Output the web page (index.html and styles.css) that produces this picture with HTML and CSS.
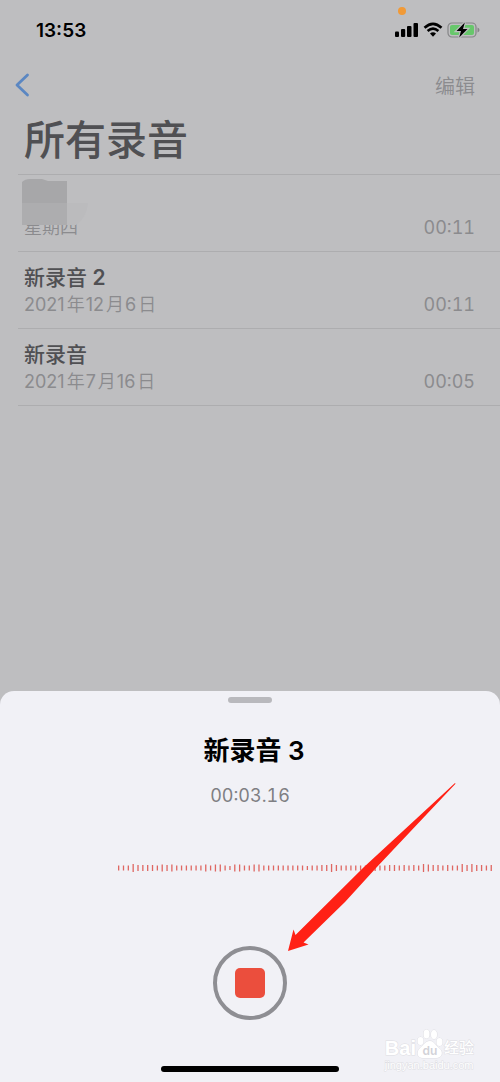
FILE: index.html
```html
<!DOCTYPE html>
<html lang="zh-CN">
<head>
<meta charset="utf-8">
<meta name="viewport" content="width=device-width, initial-scale=1">
<title>所有录音</title>
<link rel="stylesheet" href="styles.css">
</head>
<body>
<div class="screen">
  <header class="status">
    <time class="clock">13:53</time>
    <div class="indicators">
      <span class="mic-dot"></span>
      <svg width="24" height="16" viewBox="0 0 24 16" aria-hidden="true">
        <rect x="0" y="9.500" width="4" height="5.500" rx="1"/><rect x="6" y="7" width="4.200" height="8" rx="1"/><rect x="12" y="4" width="4.500" height="11" rx="1"/><rect x="18.500" y="1" width="4.500" height="14" rx="1"/>
      </svg>
      <svg width="20" height="16" viewBox="0 0 20 16" aria-hidden="true">
        <path d="M1.500 5.800Q10-2 18.500 5.800M4.600 9Q10 4.200 15.400 9" fill="none" stroke="#000" stroke-width="2.600"/>
        <path d="M7 11.600Q10 9 13 11.600L10 14.800Z"/>
      </svg>
      <svg width="33" height="18" viewBox="0 0 33 18" aria-hidden="true">
        <rect x="1" y="2" width="28" height="14" rx="4" fill="none" stroke="#858587" stroke-width="1.200"/>
        <rect x="3" y="4" width="24" height="10" rx="2" fill="#67c76b"/>
        <path d="M30.500 6.500Q32.500 7.200 32.500 9T30.500 11.500Z" fill="#858587"/>
        <path d="M17.800 1.500L9.500 10H14L12.200 16.500L20.500 8H16Z" stroke="#bebec0" stroke-width="2.400" paint-order="stroke"/>
      </svg>
    </div>
  </header>
  <nav class="nav">
    <button class="back" type="button" aria-label="返回">
      <svg width="16" height="26" viewBox="0 0 16 26" aria-hidden="true"><path d="M13.500 3L3 13L13.500 23" fill="none" stroke="#5b87c2" stroke-width="2.800" stroke-linecap="round" stroke-linejoin="round"/></svg>
    </button>
    <button class="edit" type="button">编辑</button>
  </nav>
  <main class="recordings">
    <h1 class="title">所有录音</h1>
    <ul class="list">
      <li class="row">
        <div class="info"><span class="name"></span><span class="date"><i class="weekday">星期四</i></span></div>
        <span class="length">00:11</span>
        <svg class="mask" width="68" height="48" viewBox="0 0 68 48" aria-hidden="true">
          <path d="M0 24H66Q65 38 54 46H0Z" fill="#bbbbbd"/>
          <path d="M0 3Q3 0 8 0H20L26 2H45V24H0Z" fill="#a7a7a9"/><path d="M0 24H45V46H0Z" fill="#adadaf"/>
        </svg>
      </li>
      <li class="row">
        <div class="info"><span class="name">新录音 <b>2</b></span><span class="date">2021<i class="unit">年</i>12<i class="unit">月</i>6<i class="unit">日</i></span></div>
        <span class="length">00:11</span>
      </li>
      <li class="row">
        <div class="info"><span class="name">新录音</span><span class="date">2021<i class="unit">年</i>7<i class="unit">月</i>16<i class="unit">日</i></span></div>
        <span class="length">00:05</span>
      </li>
    </ul>
  </main>
  <section class="sheet" aria-label="录音中">
    <span class="grabber"></span>
    <h2 class="sheet-title">新录音 <b>3</b></h2>
    <p class="elapsed">00:03.16</p>
    <svg id="wave" class="wave" viewBox="0 0 376 10" preserveAspectRatio="none" aria-hidden="true"></svg>
    <button class="stop" type="button" aria-label="停止"><span class="stop-mark"></span></button>
    <svg class="arrow" width="168" height="169" viewBox="0 0 168 169" aria-hidden="true"><path d="M167 0L76 84L7.500 152L5.500 146.500L0 168L20.500 161.500L15.500 159.500L57 119L88 85L167.500 .8Z" fill="#ff2115"/></svg>
    <div class="watermark">
      <div class="brand"><span class="brand-en">Bai</span>
        <svg width="28" height="31" viewBox="0 0 28 31" aria-hidden="true">
          <g fill="#fff" stroke="#dedee3" stroke-width="1"><ellipse cx="4.500" cy="13" rx="3" ry="4"/><ellipse cx="10.500" cy="6" rx="3" ry="4.500"/><ellipse cx="18" cy="6.500" rx="3" ry="4.500"/><ellipse cx="23.500" cy="14" rx="3" ry="4"/><path d="M14 13C18 13 19 17 23 20C28 24 26 30 20 30H7C1 30 0 24 4 20C8 17 9 13 14 13Z"/></g>
          <text class="paw-text" x="14" y="27" text-anchor="middle">du</text>
        </svg>
        <span class="brand-cn">经验</span></div>
      <div class="site">jingyan.baidu.com</div>
    </div>
    <span class="home"></span>
  </section>
</div>
<script src="wave.js"></script>
</body>
</html>
```
FILE: wave.js
```js
const levels = "555866665767555555757754775577555555555455668655555566556656565876656558686656";
const step = 372.6 / (levels.length - 1);
const wave = document.getElementById("wave");
[...levels].forEach((level, i) => {
  const bar = document.createElementNS("http://www.w3.org/2000/svg", "rect");
  bar.setAttribute("x", 2 + i * step);
  bar.setAttribute("y", 5 - level / 2);
  bar.setAttribute("width", 1.3);
  bar.setAttribute("height", level);
  wave.append(bar);
});
```
FILE: styles.css
```css
* { box-sizing: border-box; }
body {
  margin: 0;
  background: #bebec0;
  color: #505053;
  font-family: Inter, "Noto Sans CJK SC", sans-serif;
}
button { border: 0; padding: 0; background: none; font: inherit; }
svg { display: block; }
b { font-weight: 600; }
.screen { display: flex; flex-direction: column; min-height: 100vh; }

.status {
  display: flex;
  justify-content: space-between;
  align-items: center;
  height: 60px;
  padding: 0 20px 0 36px;
  color: #000;
}
.clock { font-size: 19px; font-weight: 600; }
.indicators { position: relative; display: flex; align-items: center; gap: 4px; }
.mic-dot {
  position: absolute;
  left: 3px;
  top: -14px;
  width: 8px;
  height: 8px;
  border-radius: 50%;
  background: #f19a37;
}
.nav {
  display: flex;
  justify-content: space-between;
  align-items: center;
  height: 50px;
  padding: 0 25px 0 14px;
}
.edit { color: #8b8b8e; font-size: 20px; font-weight: 350; }

.recordings { flex: 1; }
.title {
  margin: 0;
  padding: 0 24px;
  height: 64px;
  font-size: 41px;
  line-height: 60px;
  font-weight: 500;
}
.list { margin: 0 0 0 18px; padding: 0; list-style: none; border-top: 1px solid #adadaf; }
.row {
  position: relative;
  display: flex;
  justify-content: space-between;
  align-items: flex-end;
  height: 77px;
  padding: 0 25px 10px 6px;
  border-bottom: 1px solid #adadaf;
}
.info { display: flex; flex-direction: column; }
.name { font-size: 21px; line-height: 28px; font-weight: 500; }
.date, .length { color: #8b8b8e; font-size: 18px; line-height: 26px; }
.length, .elapsed { font-variant-numeric: tabular-nums; }
.unit, .weekday { font-style: normal; font-weight: 350; }
.unit { margin: 0 1px 0 2px; }
.mask { position: absolute; left: 4px; top: 4px; }

.sheet {
  position: relative;
  display: flex;
  flex-direction: column;
  align-items: center;
  padding: 6px 0 62px;
  border-radius: 14px 14px 0 0;
  background: #f1f1f6;
}
.grabber { width: 44px; height: 6px; border-radius: 3px; background: #b9b9bd; }
.sheet-title {
  margin: 28px 0 0;
  padding-left: 8px;
  color: #000;
  font-size: 26px;
  line-height: 40px;
  font-weight: 600;
}
.elapsed { margin: 12px 0 0; color: #7f7f83; font-size: 18px; line-height: 26px; }
.wave {
  align-self: stretch;
  width: calc(100% - 124px);
  height: 10px;
  margin: 54px 8px 0 116px;
  fill: #df6762;
}
.stop {
  display: grid;
  place-items: center;
  width: 74px;
  height: 74px;
  margin-top: 73px;
  border: 4px solid #8e8e93;
  border-radius: 50%;
}
.stop-mark { width: 30px; height: 30px; border-radius: 5px; background: #eb4e3d; }
.arrow { position: absolute; left: calc(50% + 38px); top: 92px; }
.watermark {
  position: absolute;
  right: 26px;
  bottom: 11px;
  color: #fff;
  paint-order: stroke;
  -webkit-text-stroke: 1px #dedee3;
}
.brand { display: flex; align-items: flex-end; height: 32px; line-height: 22px; }
.brand-en { font-family: "Liberation Sans", sans-serif; font-size: 20px; font-weight: 700; }
.brand-cn { font-size: 15px; font-weight: 500; }
.paw-text { fill: #d2d2d8; stroke: none; -webkit-text-stroke: 0; font-size: 12px; font-weight: 600; }
.site { font-family: "Liberation Sans", sans-serif; font-size: 11px; line-height: 12px; }
.home {
  position: absolute;
  left: 50%;
  bottom: 10px;
  width: 178px;
  height: 6px;
  margin-left: -89px;
  border-radius: 3px;
  background: #000;
}
```
